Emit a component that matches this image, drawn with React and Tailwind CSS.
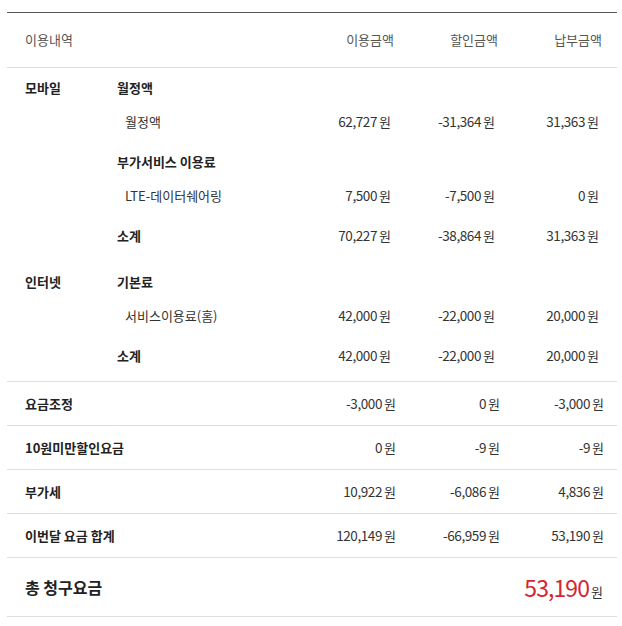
const sections = [
  {
    name: "모바일",
    rows: [
      { type: "head", label: "월정액" },
      { type: "item", label: "월정액", values: ["62,727", "-31,364", "31,363"] },
      { type: "head", label: "부가서비스 이용료" },
      { type: "item", label: "LTE-데이터쉐어링", values: ["7,500", "-7,500", "0"] },
      { type: "sum", label: "소계", values: ["70,227", "-38,864", "31,363"] },
    ],
  },
  {
    name: "인터넷",
    rows: [
      { type: "head", label: "기본료" },
      { type: "item", label: "서비스이용료(홈)", values: ["42,000", "-22,000", "20,000"] },
      { type: "sum", label: "소계", values: ["42,000", "-22,000", "20,000"] },
    ],
  },
];

const summary = [
  { label: "요금조정", values: ["-3,000", "0", "-3,000"] },
  { label: "10원미만할인요금", values: ["0", "-9", "-9"] },
  { label: "부가세", values: ["10,922", "-6,086", "4,836"] },
  { label: "이번달 요금 합계", values: ["120,149", "-66,959", "53,190"] },
];

function Won({ value }) {
  return (
    <span className="whitespace-nowrap">
      <span className="text-[13.5px] leading-[16px] tracking-[-0.03em]">{value}</span>
      <span className="ml-[2px]">원</span>
    </span>
  );
}

function Values({ values }) {
  return values.map((v, i) => (
    <div key={i} className="w-[104px] text-right leading-[20px]">
      <Won value={v} />
    </div>
  ));
}

function Section({ section }) {
  return (
    <div className="flex pt-[10px] pb-[16px] last:pb-[15px] pl-[18px] pr-[18px]">
      <div className="w-[92px] shrink-0 font-bold text-[#222] leading-[20px]">{section.name}</div>
      <div className="flex-1">
        {section.rows.map((row, i) => (
          <div
            key={i}
            className={
              "flex h-[20px] leading-[20px] " +
              (i === 0 ? "" : row.type === "item" ? "mt-[14px]" : "mt-[20px]")
            }
          >
            <div
              className={
                "flex-1 " +
                (row.type === "item" ? "pl-[8px] text-[#333]" : "font-bold text-[#222]")
              }
            >
              {row.label}
            </div>
            {row.values && <Values values={row.values} />}
          </div>
        ))}
      </div>
    </div>
  );
}

export default function App() {
  return (
    <div className="bg-white min-h-[626px] pt-[12px] font-[family-name:'Noto_Sans_CJK_KR',sans-serif] text-[13px] text-[#333]">
      <div className="ml-[7px] w-[610px] border-t border-[#555]">
        <div className="flex h-[55px] items-center border-b border-[#ddd] pl-[18px] pr-[15px] text-[#555]">
          <div className="flex-1">이용내역</div>
          <div className="w-[104px] text-right">이용금액</div>
          <div className="w-[104px] text-right">할인금액</div>
          <div className="w-[104px] text-right">납부금액</div>
        </div>

        <div className="border-b border-[#ddd]">
          {sections.map((s) => (
            <Section key={s.name} section={s} />
          ))}
        </div>

        {summary.map((r) => (
          <div key={r.label} className="flex h-[44px] items-center border-b border-[#ddd] pl-[18px] pr-[13px]">
            <div className="flex-1 font-bold leading-[20px] text-[#222]">{r.label}</div>
            <Values values={r.values} />
          </div>
        ))}

        <div className="flex h-[59px] items-center border-b border-[#ddd] pl-[18px] pr-[14px]">
          <div className="flex-1 text-[16px] font-bold text-[#222]">총 청구요금</div>
          <div className="flex items-baseline whitespace-nowrap">
            <span className="text-[23px] tracking-[-0.04em] text-[#d5252f]">53,190</span>
            <span className="ml-[2px] text-[#333]">원</span>
          </div>
        </div>
      </div>
    </div>
  );
}
